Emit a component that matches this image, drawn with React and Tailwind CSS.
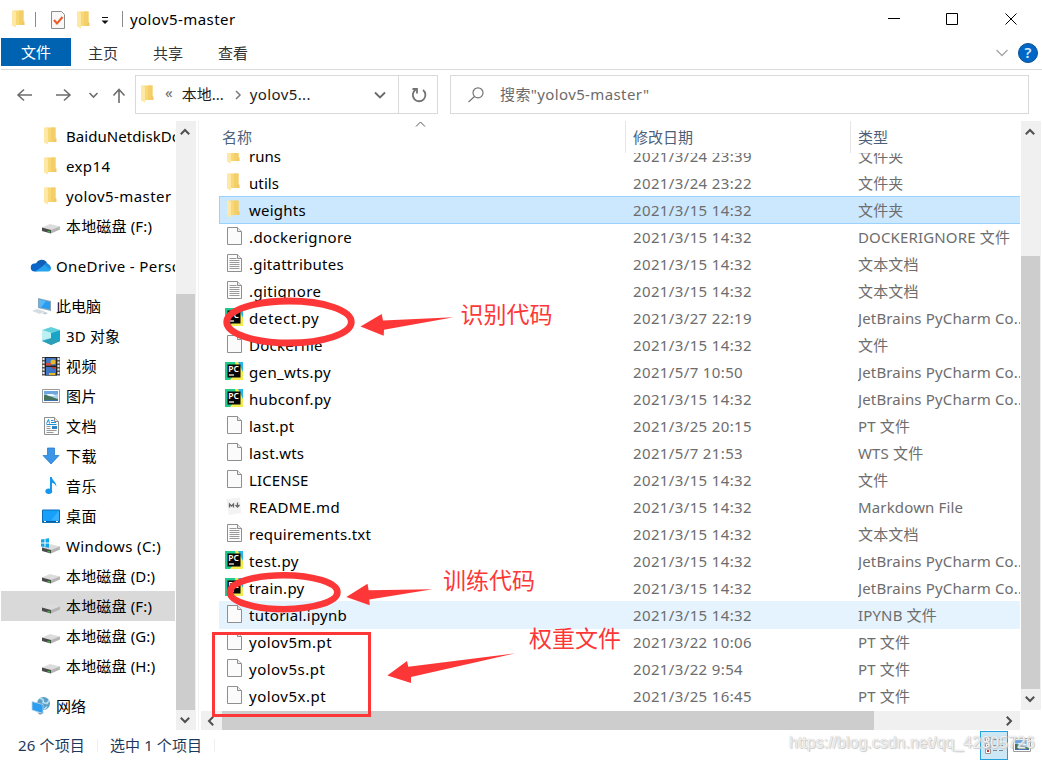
import { clsx } from 'clsx';

const RED = '#fd3737';

const places = [
  { icon: 'folder', name: 'BaiduNetdiskDownload', depth: 1, track: 'tracking-[0.05px]' },
  { icon: 'folder', name: 'exp14', depth: 1 },
  { icon: 'folder', name: 'yolov5-master', depth: 1, track: 'tracking-[0.42px]' },
  { icon: 'drive', name: '本地磁盘 (F:)', depth: 1, track: 'tracking-[0.15px]' },
  { icon: 'onedrive', name: 'OneDrive - Personal', gap: true },
  { icon: 'pc', name: '此电脑', gap: true, track: 'tracking-normal' },
  { icon: 'cube', name: '3D 对象', depth: 1, track: 'tracking-[0.15px]' },
  { icon: 'video', name: '视频', depth: 1 },
  { icon: 'picture', name: '图片', depth: 1 },
  { icon: 'document', name: '文档', depth: 1 },
  { icon: 'download', name: '下载', depth: 1 },
  { icon: 'music', name: '音乐', depth: 1 },
  { icon: 'desktop', name: '桌面', depth: 1 },
  { icon: 'windrive', name: 'Windows (C:)', depth: 1 },
  { icon: 'drive', name: '本地磁盘 (D:)', depth: 1, track: 'tracking-[0.15px]' },
  { icon: 'drive', name: '本地磁盘 (F:)', depth: 1, track: 'tracking-[0.15px]', active: true },
  { icon: 'drive', name: '本地磁盘 (G:)', depth: 1, track: 'tracking-[0.15px]' },
  { icon: 'drive', name: '本地磁盘 (H:)', depth: 1, track: 'tracking-[0.15px]' },
  { icon: 'network', name: '网络', gap: true, track: 'tracking-normal' },
];

const files = [
  { icon: 'folder', name: 'runs', date: '2021/3/24 23:39', type: '文件夹', track: 'tracking-normal' },
  { icon: 'folder', name: 'utils', date: '2021/3/24 23:22', type: '文件夹', track: 'tracking-[0.1px]' },
  { icon: 'folder', name: 'weights', date: '2021/3/15 14:32', type: '文件夹', selected: true },
  { icon: 'file', name: '.dockerignore', date: '2021/3/15 14:32', type: 'DOCKERIGNORE 文件', track: 'tracking-[0.4px]' },
  { icon: 'text', name: '.gitattributes', date: '2021/3/15 14:32', type: '文本文档' },
  { icon: 'text', name: '.gitignore', date: '2021/3/15 14:32', type: '文本文档', track: 'tracking-[0.4px]' },
  { icon: 'pycharm', name: 'detect.py', date: '2021/3/27 22:19', type: 'JetBrains PyCharm Co..', track: 'tracking-[0.6px]' },
  { icon: 'file', name: 'Dockerfile', date: '2021/3/15 14:32', type: '文件' },
  { icon: 'pycharm', name: 'gen_wts.py', date: '2021/5/7 10:50', type: 'JetBrains PyCharm Co..', track: 'tracking-[0.35px]' },
  { icon: 'pycharm', name: 'hubconf.py', date: '2021/3/15 14:32', type: 'JetBrains PyCharm Co..', track: 'tracking-[0.35px]' },
  { icon: 'file', name: 'last.pt', date: '2021/3/25 20:15', type: 'PT 文件' },
  { icon: 'file', name: 'last.wts', date: '2021/5/7 21:53', type: 'WTS 文件' },
  { icon: 'file', name: 'LICENSE', date: '2021/3/15 14:32', type: '文件', track: 'tracking-[0.1px]' },
  { icon: 'markdown', name: 'README.md', date: '2021/3/15 14:32', type: 'Markdown File', track: 'tracking-[0.4px]' },
  { icon: 'text', name: 'requirements.txt', date: '2021/3/15 14:32', type: '文本文档' },
  { icon: 'pycharm', name: 'test.py', date: '2021/3/15 14:32', type: 'JetBrains PyCharm Co..', track: 'tracking-[0.4px]' },
  { icon: 'pycharm', name: 'train.py', date: '2021/3/15 14:32', type: 'JetBrains PyCharm Co..' },
  { icon: 'file', name: 'tutorial.ipynb', date: '2021/3/15 14:32', type: 'IPYNB 文件', hover: true },
  { icon: 'file', name: 'yolov5m.pt', date: '2021/3/22 10:06', type: 'PT 文件', track: 'tracking-[0.5px]' },
  { icon: 'file', name: 'yolov5s.pt', date: '2021/3/22 9:54', type: 'PT 文件', track: 'tracking-[0.5px]' },
  { icon: 'file', name: 'yolov5x.pt', date: '2021/3/25 16:45', type: 'PT 文件', track: 'tracking-[0.5px]' },
];

function Page({ children }) {
  return (
    <>
      <path d="M2.5 .5h10l4 4v13h-14z" fill="#fbfbfb" stroke="#8f8f8f" />
      <path d="M12.5 .5v4h4" fill="#e8e8e8" stroke="#8f8f8f" />
      {children}
    </>
  );
}

function Drive() {
  return (
    <>
      <path d="M0 10.5 8 7l10 2.5-9 4.5z" fill="#dcdcdc" />
      <path d="M0 10.5 9 13v3.6L0 14z" fill="#4a4a4a" />
      <path d="m9 13 9-3.5v3L9 16.6z" fill="#b4b4b4" />
      <path d="M5.5 13.7 8 14.3v1.4l-2.5-.6z" fill="#35c435" />
    </>
  );
}

const drawings = {
  folder: (
    <>
      <path d="M4 .5h9.500V15H4z" fill="#f8d775" />
      <path d="M9 .5h4.500V15H9z" fill="#f4ce69" />
      <path d="M2 .5h2.500L6 2v15.500l-4-2z" fill="#ffe8a6" />
      <path d="M12.500 11.500h2V15h-2z" fill="#efc660" />
    </>
  ),
  file: <Page />,
  text: (
    <Page>
      <path d="M4.500 4.500h7M4.500 6.500h10M4.500 8.500h10M4.500 10.500h10M4.500 12.500h10M4.500 14.500h10" stroke="#9a9a9a" />
    </Page>
  ),
  markdown: (
    <>
      <path d="m1 2 14-1.500 1 15.500-12 2z" fill="#f3f3f3" />
      <path d="M4.500 10.500V7l2 2 2-2v3.500M12.500 5.500V9.500m-2-1.500 2 2 2-2" fill="none" stroke="#666" strokeWidth="1.300" />
    </>
  ),
  pycharm: (
    <>
      <path d="M0 0h18v18H0z" fill="#21c98a" />
      <path d="M10 0h4l4 8v10H5l7-9z" fill="#f3ec4f" />
      <path d="M13 0h5v10z" fill="#25b6e8" />
      <path d="M2.500 2.500h13v13h-13z" fill="#060606" />
      <path d="M4 13h5" stroke="#fff" strokeWidth="1.200" />
      <text x="3.200" y="9.800" fontSize="8.500" fontWeight="600" letterSpacing="0" fill="#fff">PC</text>
    </>
  ),
  drive: <Drive />,
  windrive: (
    <>
      <Drive />
      <path d="M-1 2.500 2.500 2v3.500H-1zM3.500 1.800 7 1.300v4.200H3.500zM-1 6.500h3.500V10L-1 9.500zM3.500 6.500H7v4.200l-3.500-.5z" fill="#10a6e8" />
    </>
  ),
  onedrive: (
    <>
      <path d="M5 7a6 6 0 0 1 11-1l-7 6z" fill="#0f5fb5" />
      <path d="M4 14.500A4 4 0 0 1 3.500 6.500c2-1 4-.6 5 .2L15 13z" fill="#0b66c8" />
      <path d="m4 14.500 9-6c3-2 7 0 7 3 0 2-1.500 3-3 3z" fill="#26a3ec" />
      <path d="M13 8c1-2.500 3.500-2.500 4-1 2 .5 3 3 2.500 5z" fill="#1a8ae0" />
    </>
  ),
  pc: (
    <>
      <path d="m7 1 13 3v10L7 11z" fill="#8aa7b8" />
      <path d="m8 2.300 11 2.600v7.700L8 10z" fill="#2b9cf0" />
      <path d="m8 2.300 7 1.700-5 6.500L8 10z" fill="#55b8fa" />
      <path d="m1 14 5-2 8 2.300L9 17z" fill="#d5dde2" />
      <path d="m11 16 3-1 3 1-3 1.500z" fill="#c1cad0" />
    </>
  ),
  cube: (
    <>
      <path d="M9 0 18 3 9 6 0 3z" fill="#5fd0dc" />
      <path d="M0 3 9 6v12l-9-4z" fill="#93e3ea" />
      <path d="M18 3 9 6v12l9-4z" fill="#18a5c8" />
      <path d="m0 14 9-3 9 3-9 4z" fill="#2b9fb8" />
      <path d="M0 3v10l9-2V6z" fill="#bdf0f2" />
    </>
  ),
  video: (
    <>
      <path d="M0 0h18v18.500H0z" fill="#555" />
      <path d="M1.500 1v17M16.500 1v17" stroke="#eee" strokeWidth="2" strokeDasharray="2 1.500" />
      <path d="M3 0h12v18.500H3z" fill="#222" />
      <path d="M4 1h10v7.500H4zM4 10h10v8H4z" fill="#3f77c8" />
      <path d="M4 6h5v2.500H4z" fill="#d54a35" />
      <circle cx="11" cy="5" r="2.500" fill="#e5b928" />
      <path d="M9 10h5l-2 2.500z" fill="#c93526" />
      <path d="M7 16h6v2H7z" fill="#e5b928" />
    </>
  ),
  picture: (
    <>
      <path d="M.5 2.500h17v13H.5z" fill="#fff" stroke="#9b9b9b" />
      <path d="M2 4h14v10H2z" fill="#a9d2f3" />
      <path d="M2 4h14v3L8 9 2 7z" fill="#6ea7e0" />
      <path d="M2 8c4 0 7 2 14 4v2H2z" fill="#46735a" />
      <path d="M2 13h14v1H2z" fill="#3b6fae" />
      <path d="M4 7h7l3 2H7z" fill="#e9f5fd" />
    </>
  ),
  document: (
    <Page>
      <path d="m4.500 6.500 2-4 1 4M9 3.500h2.500M9 5.500h5M4.500 7.500h10" fill="none" stroke="#1791d8" />
      <path d="M4.500 9.500h4M4.500 11.500h4M4.500 13.500h10M4.500 15.500h7" stroke="#999" />
      <path d="M10 9h5v3h-5z" fill="#2f82c7" />
    </Page>
  ),
  download: <path d="M5.500 1h7v7.500H17L9 17 1 8.500h4.500z" fill="#3c95e6" stroke="#2a7fd0" strokeWidth=".8" />,
  music: (
    <>
      <path d="M8 0h1.800c.5 4 5 4.500 4.500 10-.6-3-2.500-4-4.300-4.300V14H8z" fill="#1597ee" />
      <ellipse cx="6.800" cy="14.300" rx="3.400" ry="2.700" fill="#1597ee" />
    </>
  ),
  desktop: (
    <>
      <path d="M.5 3h17v12.500H.5z" fill="#16a0fb" stroke="#0d6fb8" />
      <path d="m17 3.500-8 10h8z" fill="#36b0ff" />
      <path d="M1 14.500h16" stroke="#0a5c9c" />
      <path d="M2 14.500h2M14 14.500h2" stroke="#fff" />
    </>
  ),
  network: (
    <>
      <circle cx="12.500" cy="6.500" r="6.500" fill="#5b9fc6" />
      <path d="M9 1.500c3 0 4 2 3 4l4 1 2-3M13 12.500l3-3" fill="none" stroke="#b7dff0" strokeWidth="1.600" />
      <path d="m1 4.500 11 3v9L1 13z" fill="#2c9df0" stroke="#bcd5e3" strokeWidth=".8" />
      <path d="m6 15.500 6 1-3 1.300z" fill="#7b9bb0" />
    </>
  ),
};

function Icon({ name, className }) {
  return (
    <svg className={clsx('h-[19px] w-[19px] shrink-0 overflow-visible', className)} viewBox="0 0 19 19">
      {drawings[name]}
    </svg>
  );
}

const turns = { up: 'rotate-0', right: 'rotate-90', down: 'rotate-180', left: '-rotate-90' };

function Chevron({ dir, className }) {
  return (
    <svg className={clsx('h-[10px] w-[10px] text-[#505050]', turns[dir], className)} viewBox="0 0 10 10" fill="none">
      <path d="M.8 7.200 5 3l4.200 4.200" stroke="currentColor" strokeWidth="2" />
    </svg>
  );
}

function TitleBar() {
  return (
    <div className="flex h-[38px] shrink-0 items-center pl-2">
      <Icon name="folder" className="ml-px mt-px" />
      <div className="ml-[6px] h-[15px] w-px bg-[#8a8a8a]" />
      <svg className="ml-[14px] mt-0.5 h-[18px] w-4" viewBox="0 0 16 18" fill="none">
        <path d="M1.500 .5h10l3 3v14h-13z" fill="#f8f8f8" stroke="#8c8c8c" />
        <path d="m4 9 3 3.500L12.500 6" stroke="#ee5a28" strokeWidth="2" />
      </svg>
      <Icon name="folder" className="ml-[9px] mt-0.5" />
      <svg className="ml-[7px] mt-1 h-2 w-2" viewBox="0 0 8 8">
        <path d="M1 .5h6" stroke="#111" />
        <path d="M.5 3.500h7L4 7z" fill="#111" />
      </svg>
      <div className="ml-[13px] h-4 w-px bg-[#8a8a8a]" />
      <span className="ml-[7px] tracking-[0.42px]">yolov5-master</span>
      <svg className="ml-auto mr-6 h-[13px] w-[130px]" viewBox="0 0 130 13" fill="none" stroke="#000">
        <path d="M0 5.500h12M58.500 .5h11v11h-11zM117.500 .5l11 11M128.500 .5l-11 11" />
      </svg>
    </div>
  );
}

function Tabs() {
  return (
    <div className="flex h-8 shrink-0 border-b border-[#dadada] text-[#333]">
      <div className="flex h-7 w-[70px] items-center justify-center bg-[#0063b1] text-white">文件</div>
      <div className="flex h-[29px] items-center gap-[35px] pl-[17px]">
        <span>主页</span>
        <span>共享</span>
        <span>查看</span>
      </div>
      <div className="ml-auto flex h-[29px] items-center gap-[10px] pr-1">
        <svg className="h-2 w-3" viewBox="0 0 12 8" fill="none">
          <path d="m.5 1 5.500 5.500L11.500 1" stroke="#a5a5a5" strokeWidth="1.300" />
        </svg>
        <div className="flex h-5 w-5 items-center justify-center rounded-full border border-[#0a4f94] bg-[#0067c7] text-[15px] font-semibold leading-none text-[#d7ebff]">?</div>
      </div>
    </div>
  );
}

function AddressBar() {
  return (
    <div className="flex h-[51px] shrink-0 pt-[5px] text-[#1c1c1c]">
      <svg className="h-[39px] w-[134px]" viewBox="0 0 134 39" fill="none" stroke="#6e6e6e" strokeWidth="1.600">
        <path d="M31 20H17m6-5.500L17 20l6 5.500M55 20h14m-6-5.500 6 5.500-6 5.500" />
        <path d="m88.500 18 4 4 4-4" />
        <path d="M118 28V14m-5.500 6.500L118 14.500l5.500 6" />
      </svg>
      <div className="flex h-[39px] w-[303px] items-center border border-[#d9d9d9]">
        <Icon name="folder" className="ml-[3px]" />
        <span className="ml-[7px] -mt-1.5 text-[#666]">«</span>
        <span className="ml-[9px] -mt-0.5">本地...</span>
        <svg className="ml-[10px] h-[10px] w-2" viewBox="0 0 8 10" fill="none">
          <path d="m2 1 4 4-4 4" stroke="#7a7a7a" strokeWidth="1.500" />
        </svg>
        <span className="ml-2 -mt-0.5 tracking-[0.4px]">yolov5...</span>
        <svg className="ml-auto mr-3 h-2 w-3" viewBox="0 0 12 8" fill="none">
          <path d="m1 1.500 5 5 5-5" stroke="#6a6a6a" strokeWidth="1.900" />
        </svg>
        <div className="flex h-full w-[39px] items-center justify-center border-l border-[#d9d9d9] pl-px">
          <svg className="h-4 w-4" viewBox="0 0 16 16" fill="none" stroke="#737373" strokeWidth="1.800">
            <path d="M12 3a6.300 6.300 0 1 1-7.500-.2M1.500 2h4.500v4.500" />
          </svg>
        </div>
      </div>
      <div className="ml-3 flex h-[39px] w-[579px] items-center border border-[#d9d9d9] text-[#6b6b6b]">
        <svg className="ml-[17px] h-4 w-4" viewBox="0 0 16 16" fill="none" stroke="#767676" strokeWidth="1.200">
          <circle cx="10" cy="5.800" r="5" />
          <path d="M6.500 9.500.5 15" />
        </svg>
        <span className="ml-4 -mt-0.5 tracking-[0.38px]">搜索"yolov5-master"</span>
      </div>
    </div>
  );
}

function Sidebar() {
  return (
    <div className="flex w-[198px] shrink-0 border-r border-[#f2f2f2]">
      <div className="w-[174px] overflow-hidden">
        {places.map((place, i) => (
          <div
            key={i}
            className={clsx(
              'flex h-[30px] items-center whitespace-nowrap',
              place.depth ? 'pl-[41px]' : 'pl-[30px]',
              place.gap && 'mt-[10px]',
              place.active && 'bg-[#d9d9d9]',
            )}
          >
            <Icon name={place.icon} className="mt-px" />
            <span className={clsx(place.depth ? 'ml-[5px]' : 'ml-[6px]', place.track || 'tracking-[0.38px]')}>
              {place.name}
            </span>
          </div>
        ))}
      </div>
      <div className="ml-px flex h-[609px] w-5 flex-col bg-[#f0f0f0]">
        <Chevron dir="up" className="ml-[4px] mt-[6px]" />
        <div className="mt-[157px] h-[416px] w-[19px] bg-[#cdcdcd]" />
        <Chevron dir="down" className="ml-[4px] mt-[5px]" />
      </div>
    </div>
  );
}

function FileRow({ file }) {
  return (
    <div
      className={clsx(
        'flex w-[801px] items-center',
        file.selected || file.hover ? '-mb-px h-[28px] pb-px' : 'h-[27px]',
        file.selected && 'bg-[#cce8ff] shadow-[inset_1px_1px_#99d1ff,inset_0_-1px_#99d1ff]',
        file.hover && 'bg-[#e5f3ff]',
      )}
    >
      <Icon name={file.icon} className="ml-[6px]" />
      <span className={clsx('ml-[5px] w-[384px]', file.track || 'tracking-[0.25px]')}>{file.name}</span>
      <span className="w-[225px] tracking-[0.37px] text-[#6d6d6d]">{file.date}</span>
      <span className="w-[162px] overflow-hidden whitespace-nowrap tracking-[0.15px] text-[#6d6d6d]">{file.type}</span>
    </div>
  );
}

function FileList() {
  return (
    <div className="flex min-w-0 grow flex-col">
      <div className="flex h-[589px]">
        <div className="w-[821px] shrink-0 pl-5">
          <div className="flex h-8 text-[#4c607a]">
            <div className="relative w-[407px] border-r border-[#e5e5e5] pl-[3px] pt-[5px]">
              名称
              <svg className="absolute left-[196px] top-0 h-[6px] w-[11px]" viewBox="0 0 11 6" fill="none">
                <path d="M1 5.500 5.500 1 10 5.500" stroke="#555" />
              </svg>
            </div>
            <div className="w-[225px] border-r border-[#e5e5e5] pl-[7px] pt-[5px]">修改日期</div>
            <div className="pl-[7px] pt-[5px]">类型</div>
          </div>
          <div className="h-[557px] overflow-hidden">
            <div className="-mt-[11px]">
              {files.map((file) => (
                <FileRow key={file.name} file={file} />
              ))}
            </div>
          </div>
        </div>
        <div className="ml-px flex w-5 flex-col bg-[#f0f0f0]">
          <Chevron dir="up" className="ml-[4px] mt-[6px]" />
          <div className="mt-[119px] h-[433px] w-[19px] bg-[#cdcdcd]" />
          <Chevron dir="down" className="ml-[4px] mt-[5px]" />
        </div>
      </div>
      <div className="ml-[2px] mt-px flex h-[19px] w-[819px] items-center bg-[#f0f0f0]">
        <Chevron dir="left" className="ml-[5px]" />
        <div className="ml-[6px] h-[19px] w-[652px] bg-[#cdcdcd]" />
        <Chevron dir="right" className="ml-auto mr-[6px]" />
      </div>
    </div>
  );
}

function StatusBar() {
  return (
    <div className="flex h-[31px] shrink-0 items-center pl-[17px] text-[#1e395b]">
      <span className="-mt-0.5 tracking-[0.15px]">26 个项目</span>
      <div className="ml-3 h-[13px] w-px bg-[#f0f0f0]" />
      <span className="-mt-0.5 ml-3 tracking-[0.1px]">选中 1 个项目</span>
      <div className="ml-3 h-[13px] w-px bg-[#f0f0f0]" />
      <div className="ml-auto flex h-[29px] w-7 items-center justify-center border border-[#26a0da] bg-[#cce8f6]">
        <svg className="h-[17px] w-[18px]" viewBox="0 0 18 17" fill="none">
          <path d="M.5 .5h5v4h-5zM.5 6.500h5v4h-5zM.5 12h5v4.500h-5z" fill="#fff" stroke="#999" />
          <path d="M8 2.500h4M14 2.500h4M8 8.500h4M14 8.500h4M8 13.500h4M14 13.500h4" stroke="#888" />
          <path d="M2 2h2v1H2zM2 8h2v1H2z" fill="#445" />
          <path d="M2 13h2v2H2z" fill="#c33" />
        </svg>
      </div>
      <Icon name="picture" className="ml-[5px] mr-[10px]" />
    </div>
  );
}

// red pen marks laid over the window
function Marks() {
  return (
    <svg className="pointer-events-none absolute inset-0 h-[761px] w-[1042px]" viewBox="0 0 1042 761">
      <g fill="none" stroke={RED}>
        <ellipse cx="289" cy="322" rx="62.300" ry="21" strokeWidth="6.800" />
        <ellipse cx="283.700" cy="592.200" rx="53.700" ry="17" strokeWidth="6.600" />
        <path d="M213.500 633.500h156v82h-156z" strokeWidth="3" />
      </g>
      <g fill={RED}>
        <path d="M360.500 326.500 381.700 314l1.300 6.500 70.500-3.200-69.500 12.400-.3 6z" />
        <path d="m346.300 597 21.200-13.300 1.200 6.600 63.800-1-63.200 10.200.4 5.800z" />
        <path d="M387.300 675.500 407 661l1.300 5.700L515 653.300 411 677v6z" />
      </g>
      <g fill={RED} fontSize="23">
        <text x="460.500" y="323">识别代码</text>
        <text x="443" y="588.500">训练代码</text>
        <text x="529" y="646.500">权重文件</text>
      </g>
    </svg>
  );
}

export default function App() {
  return (
    <div className="relative flex h-[761px] w-[1042px] flex-col overflow-hidden bg-white pl-px font-['Noto_Sans','Noto_Sans_CJK_SC',sans-serif] text-[15px] leading-[22px] text-black">
      <TitleBar />
      <Tabs />
      <AddressBar />
      <div className="flex h-[609px] shrink-0">
        <Sidebar />
        <FileList />
      </div>
      <StatusBar />
      <Marks />
      <div className="absolute left-[789px] top-[732px] font-['Liberation_Sans',sans-serif] text-[16px] text-white/80 [text-shadow:0_0_1px_#aaa,1px_1px_1px_#ccc]">
        https://blog.csdn.net/qq_42805726
      </div>
    </div>
  );
}
